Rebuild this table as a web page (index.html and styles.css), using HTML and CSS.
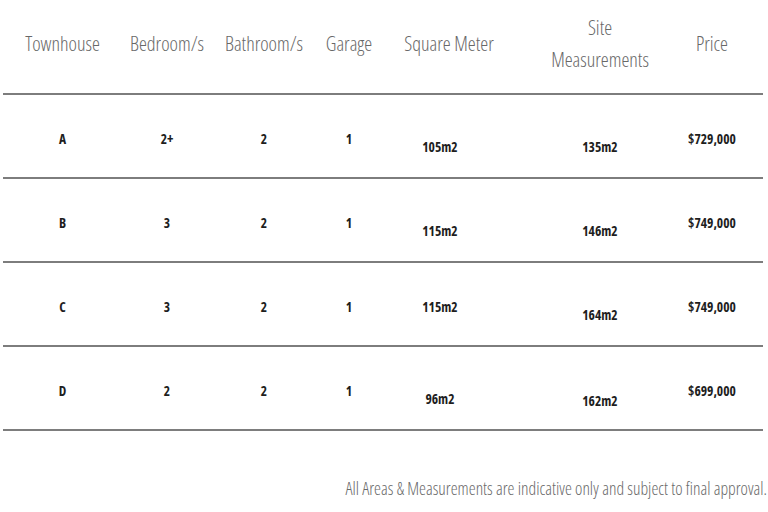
FILE: index.html
```html
<!DOCTYPE html>
<html>
<head>
<meta charset="utf-8">
<link rel="stylesheet" href="styles.css">
</head>
<body>
<div class="page">
  <div class="table">
    <div class="row head">
      <div class="cell">Townhouse</div>
      <div class="cell">Bedroom/s</div>
      <div class="cell">Bathroom/s</div>
      <div class="cell">Garage</div>
      <div class="cell">Square Meter</div>
      <div class="cell">Site<br>Measurements</div>
      <div class="cell">Price</div>
    </div>
    <div class="row data">
      <div class="cell">A</div>
      <div class="cell">2+</div>
      <div class="cell">2</div>
      <div class="cell">1</div>
      <div class="cell sq low">105m2</div>
      <div class="cell low">135m2</div>
      <div class="cell">$729,000</div>
    </div>
    <div class="row data">
      <div class="cell">B</div>
      <div class="cell">3</div>
      <div class="cell">2</div>
      <div class="cell">1</div>
      <div class="cell sq low">115m2</div>
      <div class="cell low">146m2</div>
      <div class="cell">$749,000</div>
    </div>
    <div class="row data">
      <div class="cell">C</div>
      <div class="cell">3</div>
      <div class="cell">2</div>
      <div class="cell">1</div>
      <div class="cell sq">115m2</div>
      <div class="cell low">164m2</div>
      <div class="cell">$749,000</div>
    </div>
    <div class="row data">
      <div class="cell">D</div>
      <div class="cell">2</div>
      <div class="cell">2</div>
      <div class="cell">1</div>
      <div class="cell sq low">96m2</div>
      <div class="cell lower">162m2</div>
      <div class="cell">$699,000</div>
    </div>
  </div>
  <p class="note">All Areas &amp; Measurements are indicative only and subject to final approval.</p>
</div>
</body>
</html>
```
FILE: styles.css
```css
html, body {
  margin: 0;
  padding: 0;
  background: #fff;
}
.page {
  width: 768px;
  height: 512px;
  padding-left: 3px;
  box-sizing: border-box;
}
.table {
  width: 760px;
}
.row {
  display: grid;
  grid-template-columns: 119px 90px 104px 66px 134px 168px 56px;
  align-items: center;
  border-bottom: 2px solid #7d7d7d;
}
.head {
  height: 87px;
  padding-bottom: 6px;
}
.data {
  height: 76px;
  padding-top: 6px;
}
.cell {
  text-align: center;
  font-family: "Open Sans", sans-serif;
  font-stretch: 80%;
  font-weight: 700;
  font-size: 13.5px;
  color: #1e1e1e;
  white-space: nowrap;
}
.head .cell {
  font-weight: 300;
  font-stretch: 75%;
  font-size: 20px;
  line-height: 32px;
  color: #686868;
}
.sq {
  padding-right: 18px;
}
.low {
  padding-top: 16px;
}
.lower {
  padding-top: 20px;
}
.note {
  margin: 45px 0 0;
  text-align: right;
  font-family: "Open Sans", sans-serif;
  font-stretch: 75%;
  font-weight: 300;
  font-size: 17.5px;
  line-height: 24px;
  color: #6a6a6a;
  padding-right: 1px;
}
```
